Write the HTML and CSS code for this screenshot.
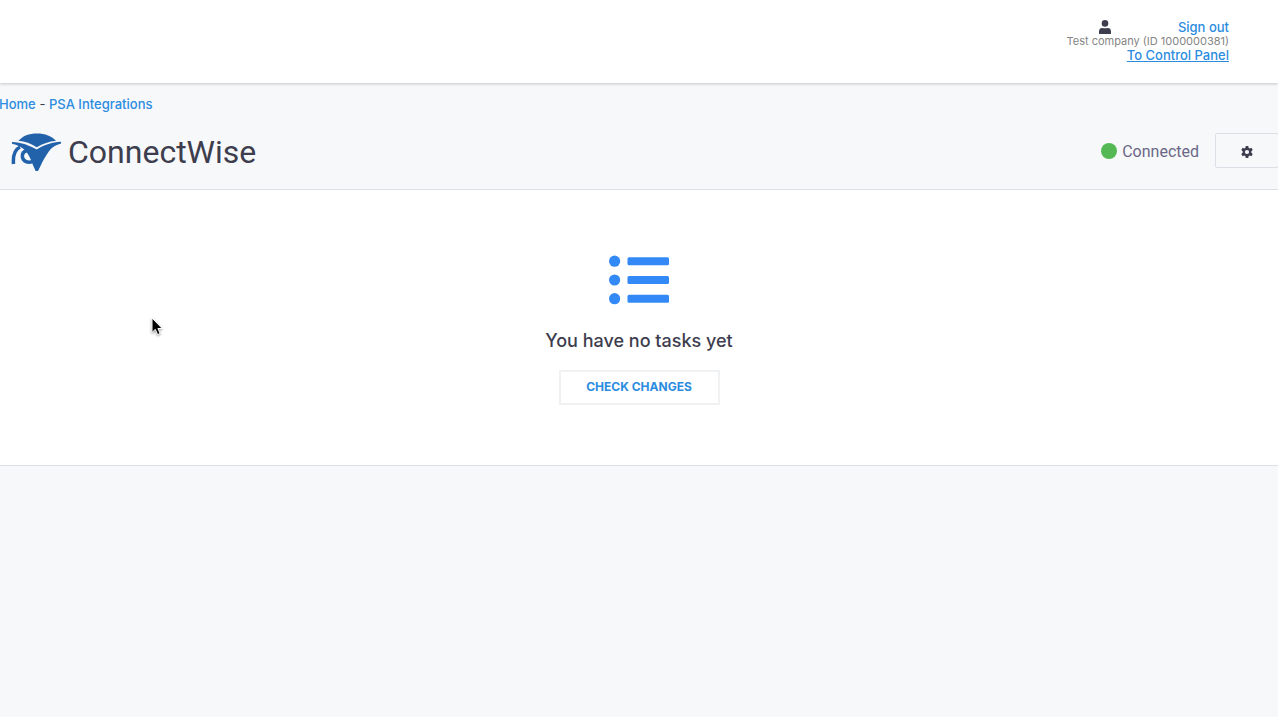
FILE: index.html
```html
<!DOCTYPE html>
<html lang="en">
<head>
    <meta charset="UTF-8">
    <meta name="viewport" content="width=device-width, initial-scale=1.0">
    <title>ConnectWise - PSA Integrations</title>
    <link rel="stylesheet" href="styles.css">
</head>
<body>
    <header class="topbar">
        <div class="account">
            <div class="account-row">
                <svg class="user-icon" viewBox="0 0 12 14" aria-hidden="true">
                    <circle cx="6" cy="3.4" r="3.3"/>
                    <path d="M0 14v-2.6C0 9 1.4 7.9 3.2 7.9c.8 0 1.4.4 2.8.4s2-.4 2.8-.4C10.600 7.900 12 9 12 11.400V14z"/>
                </svg>
                <a href="#">Sign out</a>
            </div>
            <div class="company">Test company (ID 1000000381)</div>
            <a class="panel-link" href="#">To Control Panel</a>
        </div>
    </header>

    <div class="page-head">
        <nav class="breadcrumb">
            <a href="#">Home</a> - <a href="#">PSA Integrations</a>
        </nav>
        <div class="title-row">
            <svg class="logo" viewBox="0 0 50 38" aria-hidden="true">
                <path d="M7.500 7.800C11.500 2.800 18 .4 26 .4S41 3 45 7.700c-7 .6-13 3-19.300 6.500C20 10.500 14 8.500 7.500 7.800z"/>
                <path d="M1 8.900c9.500.5 17.500 3.200 24.600 7.600C32.500 12.200 40.500 9 50 8.700v1.800c-6 1.600-9.500 4.200-12.200 8C35 22.500 32 27.500 30 32L27 38h-2.400L21.500 31C19.500 25.500 17.500 21 14 17.200 10.500 14 6.500 12 1 10.700z"/>
                <path class="ring" d="M9 14C4 16.500 1.800 22 2.500 31"/>
                <path class="ring" d="M16 17.500c-3.600 1-5 3.700-4.600 6.500.6 4 4.600 6 9.600 4.800"/>
            </svg>
            <h1>ConnectWise</h1>
            <div class="status"><span class="dot"></span>Connected</div>
            <button class="settings" type="button" aria-label="Settings">
                <svg viewBox="0 0 24 24" aria-hidden="true">
                    <path fill-rule="evenodd" d="M9.500 0h5l.7 3.500 2.300 1.300 3.400-1.200 2.500 4.300-2.700 2.400v3.400l2.700 2.400-2.500 4.300-3.400-1.200-2.300 1.300-.7 3.500h-5l-.7-3.500-2.300-1.300-3.400 1.200-2.500-4.300 2.700-2.400v-3.400L.6 7.900l2.500-4.300 3.400 1.200 2.300-1.300zM12 7.800a4.200 4.200 0 1 0 0 8.400 4.200 4.200 0 0 0 0-8.400z"/>
                </svg>
            </button>
        </div>
    </div>

    <main class="tasks">
        <svg class="list-icon" viewBox="0 0 60 50" aria-hidden="true">
            <circle cx="5.600" cy="6.200" r="5.600"/>
            <circle cx="5.600" cy="25" r="5.600"/>
            <circle cx="5.600" cy="43.700" r="5.600"/>
            <rect x="18.500" y="2.300" width="41.500" height="8" rx="1.500"/>
            <rect x="18.500" y="21" width="41.500" height="8" rx="1.500"/>
            <rect x="18.500" y="39.700" width="41.500" height="8" rx="1.500"/>
        </svg>
        <h2>You have no tasks yet</h2>
        <button class="check" type="button">CHECK CHANGES</button>
    </main>

    <svg class="cursor" viewBox="0 0 12 19" aria-hidden="true">
        <path d="M1 1v14.500l3.300-3.100 2.300 5.200 2.600-1.100-2.300-5h4.300z"/>
    </svg>
</body>
</html>
```
FILE: styles.css
```css
* {
    box-sizing: border-box;
}
body {
    margin: 0;
    background: #f6f8fa;
    color: #3d3d4e;
    font-family: Inter, "Liberation Sans", sans-serif;
    font-size: 13px;
    overflow-x: hidden;
}
a {
    color: #2b8ce0;
    font-weight: 500;
    text-decoration: none;
}
h1, h2 {
    margin: 0;
}
.topbar {
    display: flex;
    justify-content: flex-end;
    height: 83px;
    padding: 20px 49px 0 0;
    background: #fff;
    box-shadow: 0 1px 3px rgba(0, 0, 0, 0.2);
}
.account {
    line-height: 14px;
    text-align: right;
}
.account-row {
    display: flex;
    justify-content: flex-end;
    gap: 67px;
}
.user-icon {
    width: 12px;
    height: 14px;
    fill: #3d3d4e;
}
.company {
    color: #858585;
    font-size: 11px;
}
.panel-link {
    text-decoration: underline;
}
.page-head {
    padding-top: 13px;
    border-bottom: 1px solid #dcdfe6;
}
.breadcrumb {
    margin-left: -1px;
    line-height: 16px;
}
.title-row {
    display: flex;
    align-items: flex-start;
    padding: 21px 0 18px 11px;
}
.logo {
    width: 50px;
    height: 38px;
    fill: #2262aa;
}
.logo .ring {
    fill: none;
    stroke: #2262aa;
    stroke-width: 3.500;
}
h1 {
    margin-left: 7px;
    font-family: Roboto, "Liberation Sans", sans-serif;
    font-size: 32px;
    font-weight: 400;
    line-height: 38px;
}
.status {
    display: flex;
    align-items: center;
    gap: 5px;
    height: 36px;
    margin-left: auto;
    color: #6b6786;
    font-family: Roboto, "Liberation Sans", sans-serif;
    font-size: 16px;
}
.dot {
    width: 16px;
    height: 16px;
    border-radius: 50%;
    background: #54b955;
}
.settings {
    display: flex;
    align-items: center;
    justify-content: center;
    width: 64px;
    height: 35px;
    margin: 0 -1px 0 16px;
    padding: 2px 0 0;
    border: 1px solid #dcdfe6;
    border-radius: 2px;
    background: transparent;
}
.settings svg {
    width: 12px;
    height: 12px;
    fill: #3d3d4e;
}
.tasks {
    display: flex;
    flex-direction: column;
    align-items: center;
    padding: 65px 0 60px;
    border-bottom: 1px solid #dcdfe6;
    background: #fff;
}
.list-icon {
    width: 60px;
    height: 50px;
    fill: #338af7;
}
h2 {
    margin: 24px 0 17px;
    font-size: 18px;
    font-weight: 500;
    line-height: 24px;
}
.check {
    width: 161px;
    height: 35px;
    padding: 0 0 2px;
    border: 2px solid #f0f1f3;
    background: #fff;
    color: #2b8ce0;
    font-family: inherit;
    font-size: 12px;
    font-weight: 700;
}
/* mouse pointer over the page */
.cursor {
    position: absolute;
    top: 317px;
    left: 151px;
    width: 12px;
    height: 19px;
    stroke: #fff;
    filter: drop-shadow(0 1px 1px rgba(0, 0, 0, 0.4));
}
```
